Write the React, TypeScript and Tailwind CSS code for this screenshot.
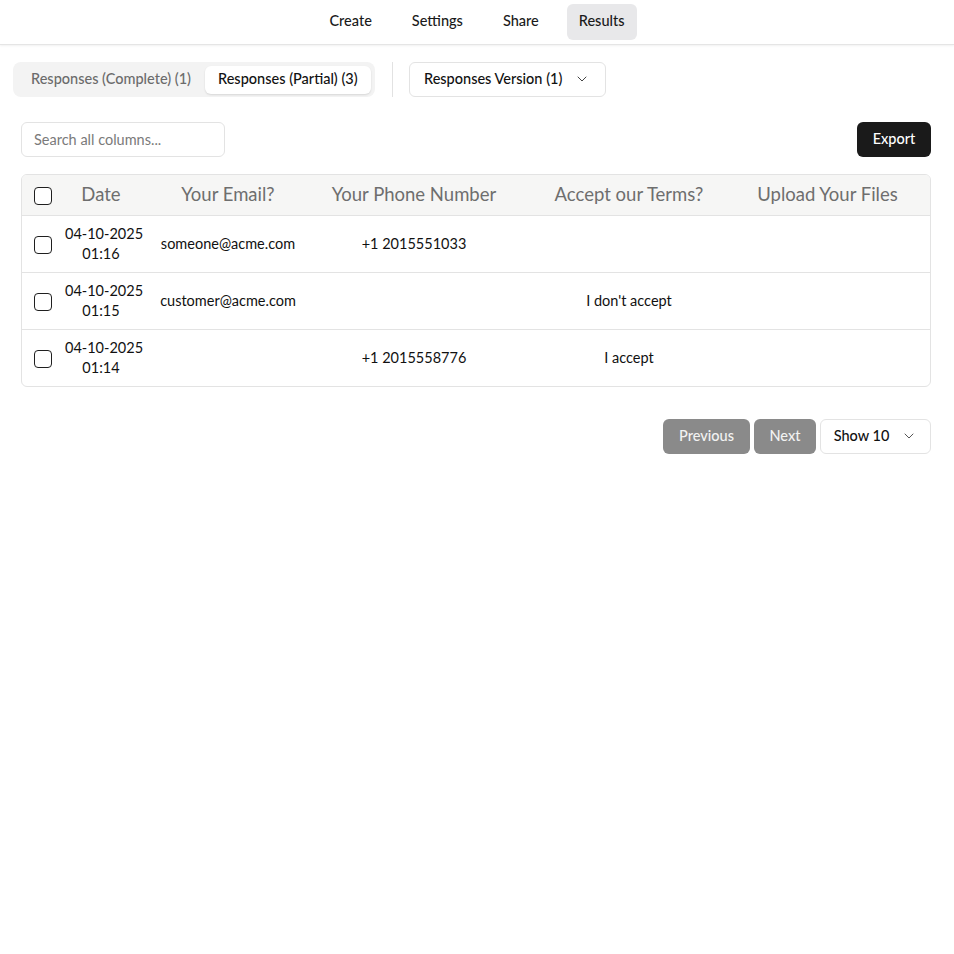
import { ChevronDown } from 'lucide-react';

interface Row {
  date: string;
  time: string;
  email: string;
  phone: string;
  terms: string;
  files: string;
}

const rows: Row[] = [
  { date: '04-10-2025', time: '01:16', email: 'someone@acme.com', phone: '+1 2015551033', terms: '', files: '' },
  { date: '04-10-2025', time: '01:15', email: 'customer@acme.com', phone: '', terms: "I don't accept", files: '' },
  { date: '04-10-2025', time: '01:14', email: '', phone: '+1 2015558776', terms: 'I accept', files: '' },
];

const Checkbox = () => (
  <span className="inline-block w-[18px] h-[18px] rounded-[4px] border-[1.5px] border-[#1f1f1f] bg-white align-middle" />
);

export default function App() {
  return (
    <div className="min-h-screen bg-white text-[#111] font-['Lato','Liberation_Sans',sans-serif]">
      {/* Top nav */}
      <div className="h-[45px] flex items-start pt-1 justify-center gap-4 border-b border-[#e5e5e5] shadow-[0_1px_2px_rgba(0,0,0,0.06)]">
        {['Create', 'Settings', 'Share', 'Results'].map((item) => (
          <button
            key={item}
            className={`h-9 px-3 pb-[3px] rounded-md text-[14.5px] font-medium text-[#1a1a1a] ${item === 'Results' ? 'bg-[#e8e8ea]' : ''}`}
          >
            {item}
          </button>
        ))}
      </div>

      {/* Tabs row */}
      <div className="flex items-center mt-[17px] ml-[13px]">
        <div className="flex items-center h-[35px] p-1 rounded-lg bg-[#f3f3f3]">
          <button className="h-[28px] px-[14px] pb-[2px] text-[14.5px] font-medium text-[#6b6b6b] whitespace-nowrap">Responses (Complete) (1)</button>
          <button className="h-[28px] px-[13px] pb-[2px] rounded-md bg-white text-[14.5px] font-medium text-[#111] whitespace-nowrap shadow-[0_1px_2px_rgba(0,0,0,0.12)]">
            Responses (Partial) (3)
          </button>
        </div>
        <div className="w-px h-[35px] bg-[#e2e2e2] ml-[17px] mr-4" />
        <button className="h-[35px] w-[197px] pb-[2px] flex items-center justify-center gap-3 rounded-md border border-[#e3e3e3] text-[14.5px] font-medium text-[#111]">
          Responses Version (1)
          <ChevronDown className="w-4 h-4 text-[#444]" strokeWidth={1.5} />
        </button>
      </div>

      <div className="pl-[21px] pr-[23px]">
        {/* Search + Export */}
        <div className="flex items-center justify-between mt-[25px]">
          <input
            placeholder="Search all columns..."
            className="w-[204px] h-[35px] px-3 rounded-md border border-[#e3e3e3] text-[14.5px] placeholder:text-[#7a7a7a] outline-none"
          />
          <button className="h-[35px] w-[74px] pb-[2px] rounded-md bg-[#1a1a1a] text-white text-[14.5px] font-medium">Export</button>
        </div>

        {/* Table */}
        <div className="mt-[17px] rounded-md border border-[#e3e3e3] overflow-hidden">
          <table className="w-full table-fixed border-collapse">
            <thead className="bg-[#f6f6f5]">
              <tr className="h-[40px] text-[18.5px] text-[#6e6e6e]">
                <th className="w-[43px] pl-3 text-left font-normal"><Checkbox /></th>
                <th className="w-[72px] font-normal whitespace-nowrap">Date</th>
                <th className="w-[182px] font-normal whitespace-nowrap">Your Email?</th>
                <th className="w-[190px] font-normal whitespace-nowrap">Your Phone Number</th>
                <th className="w-[240px] font-normal whitespace-nowrap">Accept our Terms?</th>
                <th className="font-normal whitespace-nowrap pr-6">Upload Your Files</th>
              </tr>
            </thead>
            <tbody className="text-[14.5px] text-[#111]">
              {rows.map((r, i) => (
                <tr key={i} className="h-[57px] border-t border-[#e3e3e3]">
                  <td className="pl-3"><Checkbox /></td>
                  <td className="text-center leading-5 whitespace-nowrap">
                    {r.date}
                    <br />
                    {r.time}
                  </td>
                  <td className="text-center whitespace-nowrap">{r.email}</td>
                  <td className="text-center whitespace-nowrap">{r.phone}</td>
                  <td className="text-center whitespace-nowrap">{r.terms}</td>
                  <td className="text-center whitespace-nowrap">{r.files}</td>
                </tr>
              ))}
            </tbody>
          </table>
        </div>

        {/* Pagination */}
        <div className="flex justify-end items-center gap-1 mt-[32px]">
          <button className="h-[35px] w-[87px] pb-[2px] rounded-md bg-[#8a8a8a] text-[#f2f2f2] text-[14.5px] font-medium">Previous</button>
          <button className="h-[35px] w-[62px] pb-[2px] rounded-md bg-[#8a8a8a] text-[#f2f2f2] text-[14.5px] font-medium">Next</button>
          <button className="h-[35px] w-[111px] pb-[2px] flex items-center justify-center gap-3 rounded-md border border-[#e3e3e3] text-[14.5px] font-medium text-[#111]">
            Show 10
            <ChevronDown className="w-4 h-4 text-[#555]" strokeWidth={1.5} />
          </button>
        </div>
      </div>
    </div>
  );
}
